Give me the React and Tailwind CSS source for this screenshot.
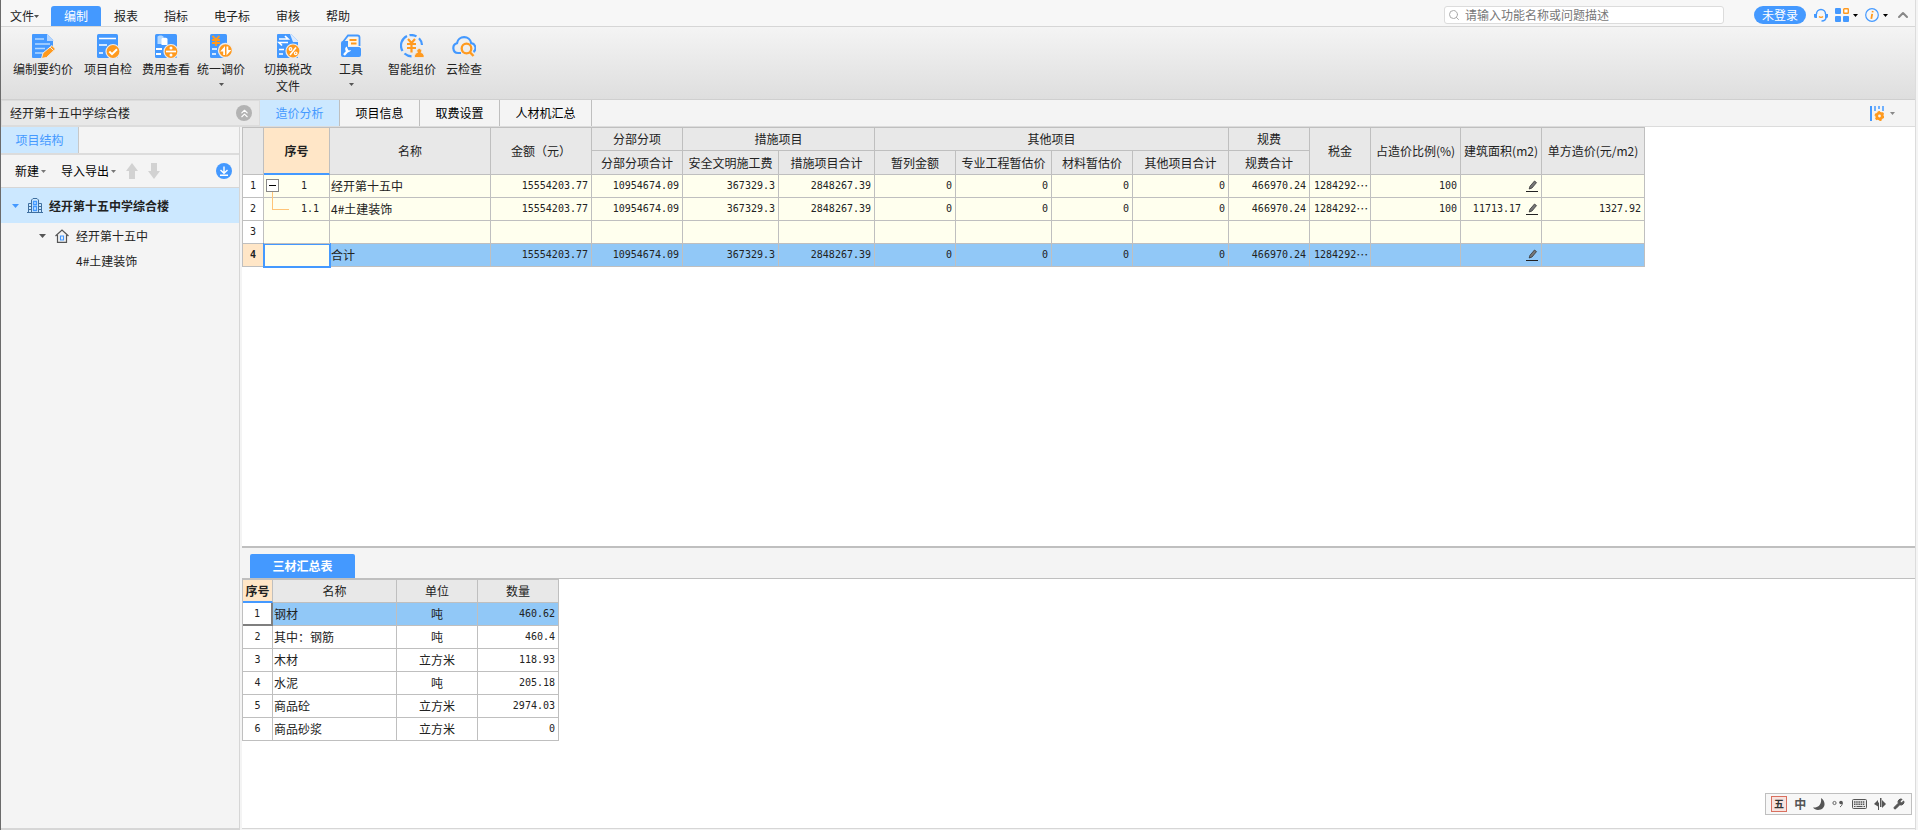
import { ChevronsUp, ChevronUp, Search, Wrench } from 'lucide-react'

const MENUS = ['编制', '报表', '指标', '电子标', '审核', '帮助']
const TABS = ['造价分析', '项目信息', '取费设置', '人材机汇总']

const COST_COLS = [21, 66, 161, 101, 91, 96, 96, 81, 96, 81, 96, 81, 61, 90, 81, 103]
const COST_SUB_HEADS = [
  '分部分项合计',
  '安全文明施工费',
  '措施项目合计',
  '暂列金额',
  '专业工程暂估价',
  '材料暂估价',
  '其他项目合计',
  '规费合计',
]
const AMOUNTS = ['15554203.77', '10954674.09', '367329.3', '2848267.39', '0', '0', '0', '0', '466970.24']
const COST_ROWS = [
  { no: '1', name: '经开第十五中', values: AMOUNTS, tax: '1284292', ratio: '100', area: '', unit: '', edit: true },
  { no: '1.1', name: '4#土建装饰', values: AMOUNTS, tax: '1284292', ratio: '100', area: '11713.17', unit: '1327.92', edit: true },
  { no: '', name: '', values: Array(9).fill(''), tax: '', ratio: '', area: '', unit: '' },
  { no: '', name: '合计', values: AMOUNTS, tax: '1284292', ratio: '', area: '', unit: '', edit: true, total: true },
]

const MATERIAL_COLS = [30, 124, 81, 81]
const MATERIALS = [
  { name: '钢材', unit: '吨', qty: '460.62' },
  { name: '其中：钢筋', unit: '吨', qty: '460.4' },
  { name: '木材', unit: '立方米', qty: '118.93' },
  { name: '水泥', unit: '吨', qty: '205.18' },
  { name: '商品砼', unit: '立方米', qty: '2974.03' },
  { name: '商品砂浆', unit: '立方米', qty: '0' },
]

const BLUE = '#4499ff'
const ORANGE = '#ff9a1f'

function Caret({ className = 'text-[#555]' }) {
  return (
    <svg viewBox="0 0 5 3" className={`h-[3px] w-[5px] shrink-0 ${className}`} fill="currentColor" aria-hidden="true">
      <path d="M0 0h5L2.5 3z" />
    </svg>
  )
}

function ToolSvg({ children }) {
  return (
    <svg viewBox="0 0 24 24" className="h-6 w-6 shrink-0" fill="none" aria-hidden="true">
      {children}
    </svg>
  )
}

function ComposeIcon() {
  return (
    <ToolSvg>
      <path d="M2 0h14l6 6v6L12 24H2a1 1 0 0 1-1-1V1a1 1 0 0 1 1-1z" fill={BLUE} />
      <path d="M16 0l7 7h-7z" fill="#b5d6ff" />
      <path d="M4 5h9M4 10h15M4 14.500h10M4 19h8" stroke="#b5d9ff" strokeWidth="1.600" />
      <path d="M10.500 24.500l1.500-5.500 9-7.500 3.500 3.500-9 8.500z" fill={ORANGE} stroke="#ececec" strokeWidth="1" />
      <path d="M19 13l3.500 3.500" stroke="#ececec" />
    </ToolSvg>
  )
}

function CheckDocIcon() {
  return (
    <ToolSvg>
      <rect x="1" width="21" height="24" rx="1.500" fill={BLUE} />
      <path d="M3 4.500h17M3 11h8M3 19h4" stroke="#fff" strokeWidth="1.700" />
      <circle cx="17" cy="17.500" r="7" fill={ORANGE} stroke="#ececec" strokeWidth="1.200" />
      <path d="M13.300 17.500l2.700 2.700 5-5" stroke="#fff" strokeWidth="2" />
    </ToolSvg>
  )
}

function FeeIcon() {
  return (
    <ToolSvg>
      <rect x="1" width="22" height="24" rx="1.500" fill={BLUE} />
      <path d="M3.500 3c0-2 6-2 6 0v7h-6z" fill="#b5d9ff" />
      <path d="M7.500 5c0-1.700 6-1.700 6 0v6h-6z" fill="#fff" />
      <path d="M2 15h6M2 20h5" stroke="#fff" strokeWidth="2" />
      <circle cx="17" cy="17.500" r="7" fill={ORANGE} stroke="#ececec" strokeWidth="1.200" />
      <path d="M12 17.500h10" stroke="#fff" strokeWidth="1.700" />
      <circle cx="17" cy="14" r="1.500" fill="#fff" />
      <circle cx="17" cy="21" r="1.500" fill="#fff" />
    </ToolSvg>
  )
}

function AdjustIcon() {
  return (
    <ToolSvg>
      <rect x="1" width="17" height="24" rx="1.500" fill={BLUE} />
      <path d="M3.500 2l3.500 3.500L10.500 2M7 5.500V12M3 6h8M3 9h8" stroke={ORANGE} strokeWidth="1.800" />
      <path d="M3 15h5M3 20h4" stroke="#fff" strokeWidth="1.700" />
      <circle cx="16.500" cy="16.500" r="7" fill={ORANGE} stroke="#ececec" strokeWidth="1.400" />
      <path d="M16 12v9h-1.800v-3.500h-3zM17.500 21.500v-9h1.800V16h3z" fill="#fff" />
    </ToolSvg>
  )
}

function TaxIcon() {
  return (
    <ToolSvg>
      <path d="M2 0h13l7 7v17H2a1 1 0 0 1-1-1V1a1 1 0 0 1 1-1z" fill={BLUE} />
      <path d="M14 0h1l7 7v1h-5z" fill="#dcebff" />
      <path d="M3 5h9L9 2M12 8.500H3l3 3" stroke="#fff" strokeWidth="1.700" />
      <path d="M3 15.500h5M3 20h4" stroke="#fff" strokeWidth="1.700" />
      <circle cx="17" cy="17" r="7" fill={ORANGE} stroke="#ececec" strokeWidth="1.200" />
      <path d="M20 13.500l-6 7.500" stroke="#fff" strokeWidth="1.600" />
      <circle cx="14.500" cy="15" r="1.300" stroke="#fff" strokeWidth="1.200" />
      <circle cx="19.700" cy="19.300" r="1.300" stroke="#fff" strokeWidth="1.200" />
    </ToolSvg>
  )
}

function ToolboxIcon() {
  return (
    <ToolSvg>
      <path d="M4 8l5-6.500h9.500c1 0 2 1 2 2V12" stroke={BLUE} strokeWidth="1.800" />
      <path d="M4 7h5v6h11.500l1.500 1.500V21a2 2 0 0 1-2 2H4a2 2 0 0 1-2-2V9a2 2 0 0 1 2-2z" fill={BLUE} />
      <path d="M9 3.500h9.500V12H9z" fill="#fff6e6" />
      <path d="M10.500 6h7M12 9.500h5.500" stroke={ORANGE} strokeWidth="1.800" />
      <path d="M5 21l4-4.500" stroke="#fff" strokeWidth="2.400" />
      <path d="M7.700 12.500a3 3 0 1 0 4.300 3.500l-2.300.5-1-1.500z" fill="#fff" />
    </ToolSvg>
  )
}

function SmartIcon() {
  return (
    <ToolSvg>
      <path
        d="M7 2.100A10.500 10.500 0 0 0 2.500 17M9.500 1.200a10.500 10.500 0 0 1 7 1.200M19 4.300a10.500 10.500 0 0 1 3 6.700M4.500 19.500A10.500 10.500 0 0 0 11.500 22.300"
        stroke={BLUE}
        strokeWidth="2.200"
      />
      <path d="M8 5l3.500 4L15 5M11.500 9v9.500M7 10h9M7 14h9" stroke={ORANGE} strokeWidth="2.200" />
      <path d="M14.500 23.500c-.5-3 1.500-4.500 3-5a2.400 2.400 0 1 1 3.600 0c1.500.5 3.400 2 3 5z" fill={ORANGE} stroke="#ececec" strokeWidth=".8" />
    </ToolSvg>
  )
}

function CloudIcon() {
  return (
    <ToolSvg>
      <path d="M9 19H6A5 5 0 0 1 5 9.200a7.200 7.200 0 0 1 14.200 0A4.900 4.900 0 0 1 21.500 18" stroke={BLUE} strokeWidth="2.200" />
      <circle cx="14.500" cy="14.500" r="4.800" stroke={ORANGE} strokeWidth="2.300" />
      <path d="M17.700 18l3.800 4" stroke={ORANGE} strokeWidth="2.400" />
    </ToolSvg>
  )
}

function RibbonButton({ icon, label, second, caret, className }) {
  return (
    <button type="button" className={`flex flex-col items-center leading-[17px] ${className}`}>
      {icon}
      <span className="pt-[2px] whitespace-nowrap">{label}</span>
      {second && <span>{second}</span>}
      {caret && (
        <span className="pt-1.5">
          <Caret />
        </span>
      )}
    </button>
  )
}

function MenuBar() {
  return (
    <header className="flex h-[27px] shrink-0 items-end border-b border-[#d6d6d6] bg-[#f7f7f7]">
      <nav className="flex">
        <button type="button" className="flex h-5 w-[50px] items-center pl-[9px]">
          文件
          <Caret />
        </button>
        {MENUS.map((m, i) => (
          <button
            key={m}
            type="button"
            className={`h-5 rounded-t-[3px] px-[13px] ${i === 0 ? 'bg-[#4499ff] text-white' : ''}`}
          >
            {m}
          </button>
        ))}
      </nav>
      <div className="mb-[2px] ml-auto flex items-center pr-1">
        <label className="mr-[30px] flex h-[18px] w-[280px] items-center rounded-[3px] border border-[#dcdcdc] bg-white pl-[3px]">
          <Search size={12} className="shrink-0 text-[#aaa]" />
          <input
            type="text"
            aria-label="搜索"
            placeholder="请输入功能名称或问题描述"
            className="ml-[5px] w-full bg-transparent outline-none placeholder:text-[#777]"
          />
        </label>
        <button type="button" className="h-[18px] w-[52px] rounded-full bg-[#4499ff] text-white">
          未登录
        </button>
        <button type="button" aria-label="客服" className="ml-2">
          <svg viewBox="0 0 14 14" className="h-[14px] w-[14px]" fill="none">
            <path d="M2.500 6a4.500 4.500 0 0 1 9 0M12 9c0 2.500-2 4-4.500 4" stroke={BLUE} strokeWidth="1.500" />
            <path d="M0 6h3v4H1.500A1.500 1.500 0 0 1 0 8.500zM14 6h-3v4h1.500A1.500 1.500 0 0 0 14 8.500z" fill={BLUE} />
            <path d="M5 8.500c1 1 3 1 4 0" stroke={ORANGE} strokeWidth="1.500" />
          </svg>
        </button>
        <button type="button" aria-label="应用" className="ml-[7px] flex items-center gap-1">
          <svg viewBox="0 0 14 14" className="h-[14px] w-[14px]" fill={BLUE}>
            <rect width="6" height="6" rx="1" />
            <rect y="8" width="6" height="6" rx="1" />
            <rect x="8" y="8" width="6" height="6" rx="1" />
            <rect x="8.700" y=".7" width="4.600" height="4.600" rx=".6" fill="#fff" stroke={ORANGE} strokeWidth="1.400" />
          </svg>
          <Caret className="text-black" />
        </button>
        <button type="button" aria-label="信息" className="ml-[7px] flex items-center gap-1">
          <svg viewBox="0 0 14 14" className="h-[14px] w-[14px]" fill="none">
            <circle cx="7" cy="7" r="6.300" stroke={BLUE} strokeWidth="1.200" />
            <path d="M7.800 3l-.3 1.400M7.200 5.800l-.9 5" stroke={ORANGE} strokeWidth="1.800" />
          </svg>
          <Caret className="text-black" />
        </button>
        <button type="button" aria-label="收起功能区" className="ml-[7px] text-[#888]">
          <ChevronUp size={16} strokeWidth={3} />
        </button>
      </div>
    </header>
  )
}

function Ribbon() {
  return (
    <div className="flex h-[73px] shrink-0 items-start border-b border-[#cfcfcf] bg-linear-to-b from-[#f4f4f4] to-[#dedede] pt-[7px] pl-[10px]">
      <RibbonButton icon={<ComposeIcon />} label="编制要约价" className="w-16" />
      <RibbonButton icon={<CheckDocIcon />} label="项目自检" className="ml-1 w-[58px]" />
      <RibbonButton icon={<FeeIcon />} label="费用查看" className="w-[58px]" />
      <RibbonButton icon={<AdjustIcon />} label="统一调价" caret className="w-[52px]" />
      <RibbonButton icon={<TaxIcon />} label="切换税改" second="文件" className="ml-4 w-[50px]" />
      <RibbonButton icon={<ToolboxIcon />} label="工具" caret className="ml-[18px] w-10" />
      <RibbonButton icon={<SmartIcon />} label="智能组价" className="ml-4 w-[50px]" />
      <RibbonButton icon={<CloudIcon />} label="云检查" className="ml-1 w-[46px]" />
    </div>
  )
}

function TabRow() {
  return (
    <div className="flex h-[27px] shrink-0 border-b border-[#dcdcdc] bg-[#f4f4f4]">
      <div className="flex w-[259px] shrink-0 items-center justify-between border border-[#dcdcdc] bg-[#e8e8e8] pr-[7px] pl-2">
        经开第十五中学综合楼
        <button
          type="button"
          aria-label="折叠"
          className="flex h-4 w-4 items-center justify-center rounded-full bg-[#b3b3b3] text-white"
        >
          <ChevronsUp size={13} />
        </button>
      </div>
      <nav className="flex">
        {TABS.map((t, i) => (
          <button
            key={t}
            type="button"
            className={`border-r border-[#bfbfbf] px-[15px] whitespace-nowrap ${
              i === 0 ? 'bg-[#cce8ff] text-[#4499ff]' : 'text-black'
            } ${i === TABS.length - 1 ? 'w-[92px]' : 'w-20'}`}
          >
            {t}
          </button>
        ))}
      </nav>
      <button type="button" aria-label="列设置" className="mr-5 ml-auto flex items-center gap-1.5">
        <svg viewBox="0 0 14 15" className="h-[15px] w-[14px]" fill="none">
          <path d="M1 0v15" stroke={BLUE} strokeWidth="2" />
          <path d="M5 0v5M9 0v3M13 0v5" stroke={BLUE} strokeWidth="1.500" />
          <circle cx="9.500" cy="10" r="2.800" stroke={ORANGE} strokeWidth="2.800" />
          <circle cx="9.500" cy="10" r="4.300" stroke={ORANGE} strokeWidth="1.400" strokeDasharray="2.200 2.300" />
        </svg>
        <Caret className="text-[#888]" />
      </button>
    </div>
  )
}

function Sidebar() {
  return (
    <aside className="flex w-[239px] shrink-0 flex-col border-r border-b-2 border-[#d6d6d6]">
      <div className="flex h-[28px] border-b-2 border-[#dcdcdc]">
        <button type="button" className="w-[78px] border-r border-[#c8c8c8] bg-[#cce8ff] text-[#4499ff]">
          项目结构
        </button>
      </div>
      <div className="flex h-[33px] items-center border-b border-[#d6d6d6] pr-[7px] pl-[14px] text-black">
        <button type="button" className="flex items-center gap-[2px]">
          新建
          <Caret className="text-[#777]" />
        </button>
        <button type="button" className="ml-[15px] flex items-center gap-[2px]">
          导入导出
          <Caret className="text-[#777]" />
        </button>
        <button type="button" aria-label="上移" className="ml-[10px]">
          <svg viewBox="0 0 12 16" className="h-4 w-3" fill="#d2d2d2">
            <path d="M6 0l6 8H9v8H3V8H0z" />
          </svg>
        </button>
        <button type="button" aria-label="下移" className="ml-[10px]">
          <svg viewBox="0 0 12 16" className="h-4 w-3" fill="#d2d2d2">
            <path d="M6 16l6-8H9V0H3v8H0z" />
          </svg>
        </button>
        <button type="button" aria-label="下载" className="ml-auto">
          <svg viewBox="0 0 16 16" className="h-4 w-4" fill="none" stroke="#fff" strokeWidth="1.400">
            <circle cx="8" cy="8" r="8" fill={BLUE} stroke="none" />
            <path d="M8 3.500v6.500M4.500 7L8 10.300 11.500 7M4 12.300h8" />
          </svg>
        </button>
      </div>
      <ul>
        <li className="flex h-[35px] items-center bg-[#cce8ff] pl-[11px] font-bold">
          <svg viewBox="0 0 7 4" className="h-1 w-[7px]" fill={BLUE} aria-hidden="true">
            <path d="M0 0h7L3.500 4z" />
          </svg>
          <svg viewBox="0 0 16 15" className="mr-[6px] ml-2 h-[15px] w-4" fill="none" stroke="#3f6f9f" aria-hidden="true">
            <path d="M0 14.500h16M1.500 14V5.500h3V14M11.500 14V5.500h3V14M4.500 14V2L6 .5h4L11.500 2v12M2 8.500h2M2 11.500h2M12 8.500h2M12 11.500h2" />
            <path d="M6.500 3.500h3v3h-3zM6.500 8.500h3v4h-3z" stroke={BLUE} strokeWidth="1.300" />
          </svg>
          经开第十五中学综合楼
        </li>
        <li className="flex h-[25px] items-center pl-[38px]">
          <svg viewBox="0 0 7 4" className="h-1 w-[7px]" fill="#555" aria-hidden="true">
            <path d="M0 0h7L3.500 4z" />
          </svg>
          <svg viewBox="0 0 14 14" className="mr-[7px] ml-[9px] h-[14px] w-[14px]" fill="none" stroke="#555" strokeWidth="1.200" aria-hidden="true">
            <path d="M.5 7L7 1l6.500 6M2.500 6v7.400h9V6" />
            <path d="M5.500 7h3v4h-3z" stroke={BLUE} />
          </svg>
          经开第十五中
        </li>
        <li className="flex h-[25px] items-center pl-[75px]">4#土建装饰</li>
      </ul>
    </aside>
  )
}

function EditIcon() {
  return (
    <svg viewBox="0 0 12 12" className="h-3 w-3 shrink-0" fill="none" aria-hidden="true">
      <path d="M3.200 9l.8-2.800L8.500 1l2 1.600L6 8z" fill="#777" stroke="#333" strokeWidth=".8" />
      <path d="M0 11.500h12" stroke="#222" />
    </svg>
  )
}

function CostTable() {
  const th = 'border-r border-b border-[#bfbfbf] font-normal whitespace-nowrap'
  const td = 'h-[23px] border-r border-b border-[#bfbfbf] whitespace-nowrap'
  const num = `${td} pr-[3px] text-right font-mono text-[10px]`
  return (
    <table className="w-[1403px] table-fixed border-separate border-spacing-0 border-t border-l border-[#bfbfbf] text-[#222]">
      <colgroup>
        {COST_COLS.map((w, i) => (
          <col key={i} style={{ width: w }} />
        ))}
      </colgroup>
      <thead className="bg-[#e8e8e8]">
        <tr className="h-[23px]">
          <th rowSpan={2} className={th} aria-label="行号" />
          <th rowSpan={2} className="border-r border-b-2 border-r-[#bfbfbf] border-b-[#4499ff] bg-[#ffe6c7] font-bold">
            序号
          </th>
          <th rowSpan={2} className={th}>名称</th>
          <th rowSpan={2} className={th}>金额（元）</th>
          <th className={th}>分部分项</th>
          <th colSpan={2} className={th}>措施项目</th>
          <th colSpan={4} className={th}>其他项目</th>
          <th className={th}>规费</th>
          <th rowSpan={2} className={th}>税金</th>
          <th rowSpan={2} className={th}>占造价比例(%)</th>
          <th rowSpan={2} className={th}>建筑面积(m2)</th>
          <th rowSpan={2} className={th}>单方造价(元/m2)</th>
        </tr>
        <tr className="h-6">
          {COST_SUB_HEADS.map((h) => (
            <th key={h} className={th}>{h}</th>
          ))}
        </tr>
      </thead>
      <tbody>
        {COST_ROWS.map((row, i) => (
          <tr key={i} className={row.total ? 'bg-[#91c8f7]' : 'bg-[#ffffee]'}>
            <th
              scope="row"
              className={`${td} text-center font-mono text-[10px] ${
                row.total ? 'bg-[#ffe6c7] font-bold' : 'bg-white font-normal'
              }`}
            >
              {i + 1}
            </th>
            <td
              className={
                row.total
                  ? 'h-[23px] bg-[#ffffee] outline-2 -outline-offset-1 outline-[#4499ff]'
                  : `${td} relative pr-[10px] text-right font-mono text-[10px]`
              }
            >
              {row.no === '1' && (
                <button
                  type="button"
                  aria-label="折叠"
                  className="absolute top-1 left-[2px] flex h-[13px] w-[13px] items-center justify-center border border-[#888] bg-white"
                >
                  <span className="h-px w-[7px] bg-black" />
                </button>
              )}
              {row.no === '1.1' && (
                <span className="absolute -top-[6px] left-2 h-[18px] w-[17px] border-b border-l border-[#ffc477]" />
              )}
              <span className={row.no === '1' ? 'pr-3' : ''}>{row.no}</span>
            </td>
            <td className={`${td} pl-px`}>{row.name}</td>
            {row.values.map((v, j) => (
              <td key={j} className={num}>{v}</td>
            ))}
            <td className={`${td} pl-1 font-mono text-[10px] leading-4`}>
              {row.tax && (
                <span className="flex items-center">
                  {row.tax}
                  <span className="font-sans text-[12px]">…</span>
                </span>
              )}
            </td>
            <td className={num}>{row.ratio}</td>
            <td className={num}>
              {row.edit && (
                <span className="flex items-center justify-end gap-[5px]">
                  {row.area}
                  <EditIcon />
                </span>
              )}
            </td>
            <td className={num}>{row.unit}</td>
          </tr>
        ))}
      </tbody>
    </table>
  )
}

function MaterialTable() {
  const cell = 'h-[23px] border-r border-b border-[#bfbfbf] whitespace-nowrap'
  return (
    <table className="w-[317px] table-fixed border-separate border-spacing-0 border-t border-l border-[#bfbfbf] text-[#222]">
      <colgroup>
        {MATERIAL_COLS.map((w, i) => (
          <col key={i} style={{ width: w }} />
        ))}
      </colgroup>
      <thead className="bg-[#e8e8e8]">
        <tr>
          <th className="h-[23px] border-r border-b-2 border-r-[#bfbfbf] border-b-[#4499ff] bg-[#ffe6c7] font-bold">序号</th>
          <th className={`${cell} font-normal`}>名称</th>
          <th className={`${cell} font-normal`}>单位</th>
          <th className={`${cell} font-normal`}>数量</th>
        </tr>
      </thead>
      <tbody>
        {MATERIALS.map((m, i) => (
          <tr key={m.name} className={i === 0 ? 'bg-[#91c8f7]' : 'bg-white'}>
            <th
              scope="row"
              className={`h-[23px] bg-white text-center font-mono text-[10px] font-normal ${
                i === 0 ? 'border-r-2 border-b-2 border-[#7f7f7f]' : 'border-r border-b border-[#bfbfbf]'
              }`}
            >
              {i + 1}
            </th>
            <td className={`${cell} pl-px`}>{m.name}</td>
            <td className={`${cell} text-center`}>{m.unit}</td>
            <td className={`${cell} pr-[3px] text-right font-mono text-[10px]`}>{m.qty}</td>
          </tr>
        ))}
      </tbody>
    </table>
  )
}

function ImeBar() {
  return (
    <div className="absolute right-[3px] bottom-[13px] flex h-[22px] w-[147px] items-center justify-between border border-[#bfbfbf] bg-[#f7f7f7] pr-[6px] pl-[5px] text-[#555]">
      <button
        type="button"
        className="flex h-4 w-4 items-center justify-center border border-[#d9705f] bg-[#f7e3df] text-[10px] leading-none font-bold text-[#333]"
      >
        五
      </button>
      <button type="button" className="leading-none font-bold">中</button>
      <button type="button" aria-label="半角">
        <svg viewBox="0 0 12 12" className="h-3 w-3" fill="#555">
          <path d="M8 0c6 4 4 12-3 12C3 12 1 11 0 9.500 5 10 9 7 8 0z" />
        </svg>
      </button>
      <button type="button" aria-label="标点">
        <svg viewBox="0 0 12 8" className="h-2 w-3" fill="none">
          <circle cx="2.500" cy="3" r="1.600" stroke="#666" />
          <circle cx="9" cy="2.500" r="1.800" fill="#555" />
          <path d="M10.300 3c0 2-1 3-2.300 4" stroke="#555" />
        </svg>
      </button>
      <button type="button" aria-label="软键盘">
        <svg viewBox="0 0 15 10" className="h-[10px] w-[15px]" fill="none" stroke="#555">
          <rect x=".5" y=".5" width="14" height="9" rx="1" fill="#e8e8e8" />
          <path d="M2 3h11M2 5.200h11" strokeWidth="1.400" strokeDasharray="1.500 .7" />
          <path d="M2 7.500h1.500M4.500 7.500h6M11.500 7.500H13" strokeWidth="1.200" />
        </svg>
      </button>
      <button type="button" aria-label="切换">
        <svg viewBox="0 0 12 12" className="h-3 w-3" fill="#555">
          <path d="M0 6l4-4v2.500h1V12H4V8.500zM12 6L8 10V2zM6 0h1.500v9H6z" />
        </svg>
      </button>
      <button type="button" aria-label="设置">
        <Wrench size={12} fill="currentColor" />
      </button>
    </div>
  )
}

export default function App() {
  return (
    <div className="flex h-screen flex-col bg-[#f4f4f4] pr-[2px] [font-family:'Noto_Sans_CJK_SC',sans-serif] text-[12px] leading-4 text-[#222] [&_.font-mono]:[font-family:'DejaVu_Sans_Mono','Noto_Sans_CJK_SC',monospace] [&_.font-sans]:[font-family:'Noto_Sans_CJK_SC',sans-serif]">
      <div className="flex min-h-0 flex-1 flex-col border-r border-l border-r-[#dcdcdc] border-l-[#6b6b6b]">
        <MenuBar />
        <Ribbon />
        <TabRow />
        <div className="flex min-h-0 flex-1">
          <Sidebar />
          <main className="relative mb-px ml-[2px] flex min-w-0 flex-1 flex-col border-b border-[#d6d6d6] bg-white">
            <section className="min-h-0 flex-1 overflow-hidden">
              <CostTable />
            </section>
            <section className="flex h-[282px] shrink-0 flex-col border-t-2 border-[#bfbfbf]">
              <div className="flex h-[31px] shrink-0 items-end border-b border-[#bfbfbf] bg-[#f4f4f4] pl-2">
                <button type="button" className="h-6 w-[105px] rounded-t-[2px] bg-[#4499ff] font-bold text-white">
                  三材汇总表
                </button>
              </div>
              <MaterialTable />
            </section>
            <ImeBar />
          </main>
        </div>
      </div>
    </div>
  )
}
